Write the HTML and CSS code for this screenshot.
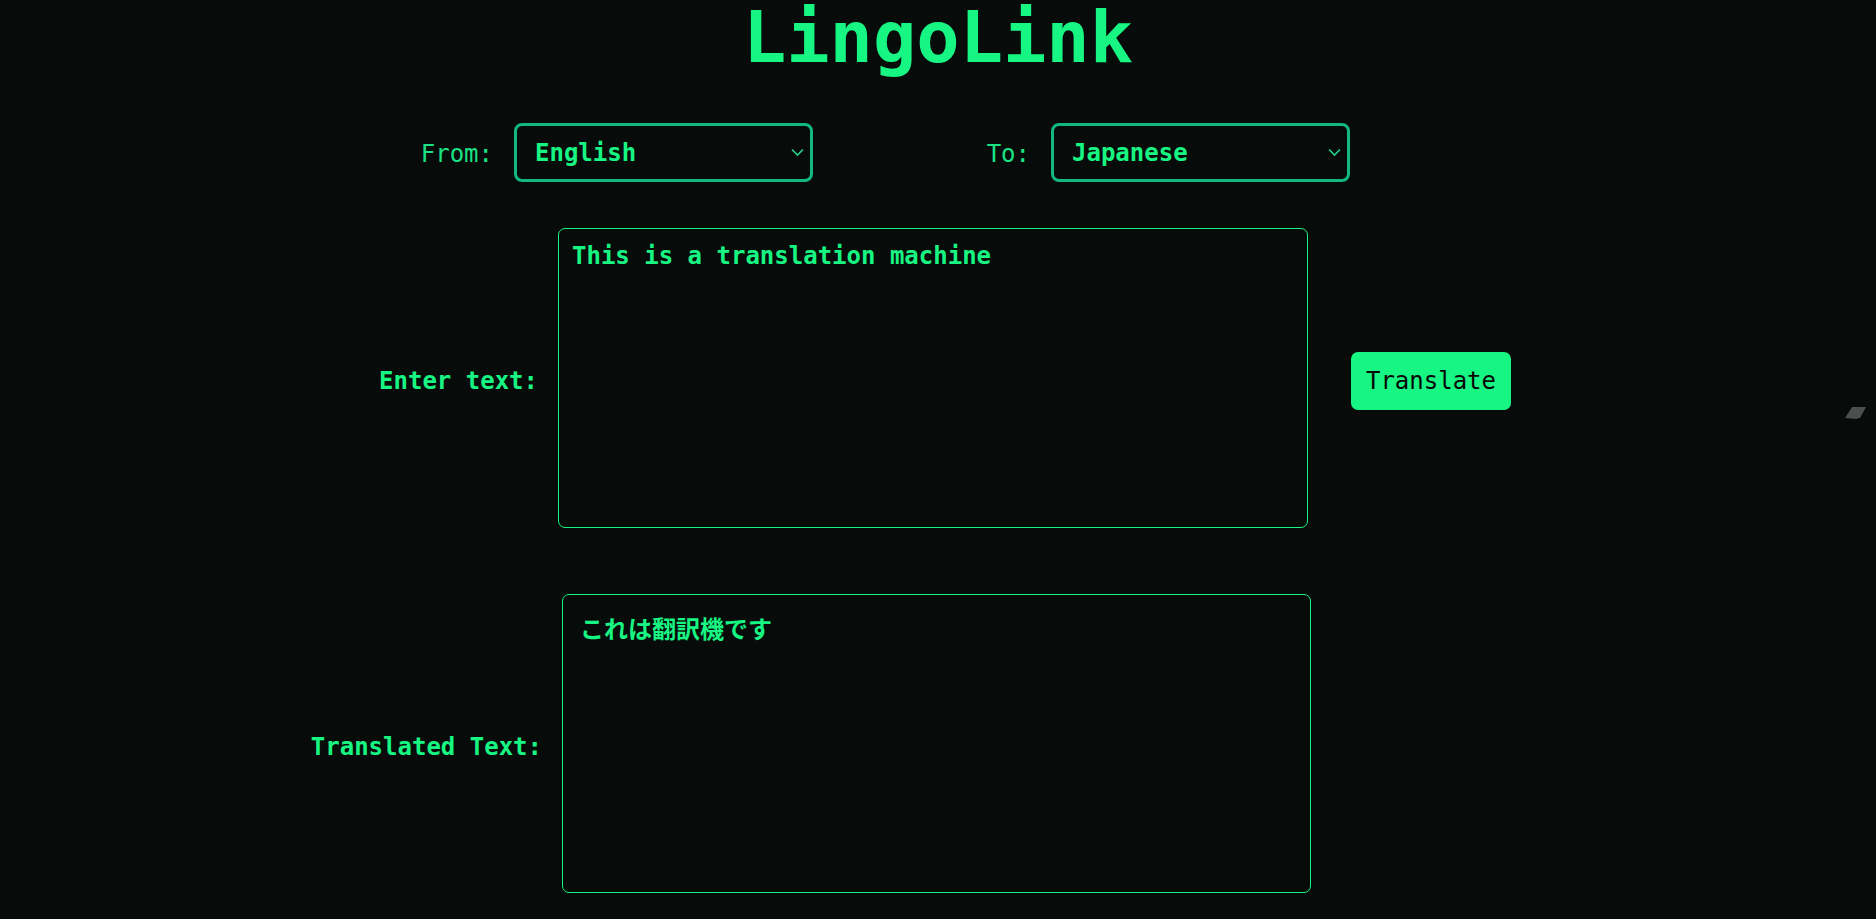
FILE: index.html
```html
<!DOCTYPE html>
<html lang="en">
<head>
<meta charset="utf-8">
<title>LingoLink</title>
<link rel="stylesheet" href="styles.css">
</head>
<body>
<main class="app">
  <h1 class="title">LingoLink</h1>

  <div class="lang-row">
    <div class="lang-group lang-group--from">
      <label class="lang-label" for="from">From:</label>
      <div class="select-wrap">
        <select id="from" class="lang-select">
          <option>English</option>
          <option>Japanese</option>
        </select>
        <svg class="chevron" width="13" height="9" viewBox="0 0 13 9"><path d="M1 1.5 L6.5 7 L12 1.5" fill="none" stroke="currentColor" stroke-width="1.7"/></svg>
      </div>
    </div>
    <div class="lang-group lang-group--to">
      <label class="lang-label" for="to">To:</label>
      <div class="select-wrap">
        <select id="to" class="lang-select">
          <option>Japanese</option>
          <option>English</option>
        </select>
        <svg class="chevron" width="13" height="9" viewBox="0 0 13 9"><path d="M1 1.5 L6.5 7 L12 1.5" fill="none" stroke="currentColor" stroke-width="1.7"/></svg>
      </div>
    </div>
  </div>

  <div class="io-row io-row--input">
    <label class="io-label" for="src">Enter text:</label>
    <textarea id="src" class="io-text">This is a translation machine</textarea>
    <button class="translate-btn" type="button">Translate</button>
  </div>

  <div class="io-row io-row--output">
    <label class="io-label" for="dst">Translated Text:</label>
    <textarea id="dst" class="io-text" readonly>これは翻訳機です</textarea>
  </div>
</main>
<div class="edge-widget">
  <svg width="22" height="13" viewBox="0 0 22 13"><polygon points="7,0 21,0 15,11 13,11 12,12 0,11" fill="#4d4f4f"/></svg>
</div>
</body>
</html>
```

FILE: styles.css
```css
html, body {
  margin: 0;
  padding: 0;
  background: #070b0a;
  height: 100%;
  overflow: hidden;
}

body {
  font-family: "DejaVu Sans Mono", "Noto Sans CJK JP", monospace;
  color: #17f582;
  position: relative;
}

.app {
  display: flex;
  flex-direction: column;
}

.title {
  margin: 0;
  padding-top: 1px;
  font-size: 72px;
  line-height: 72px;
  font-weight: bold;
  text-align: center;
  color: #17f682;
}

.lang-row {
  display: flex;
  align-items: center;
  margin-top: 50px;
  padding-left: 393px;
}

.lang-group {
  display: flex;
  align-items: center;
}

.lang-group--to {
  margin-left: 117px;
}

.lang-label {
  width: 100px;
  margin-right: 21px;
  text-align: right;
  font-size: 24px;
  font-weight: normal;
  color: #1ae285;
  padding-top: 2px;
}

.select-wrap {
  position: relative;
  display: flex;
}

.lang-select {
  appearance: none;
  -webkit-appearance: none;
  box-sizing: border-box;
  width: 299px;
  height: 59px;
  margin: 0;
  padding: 0 40px 0 18px;
  background: #070b0a;
  color: #17f582;
  border: 3px solid #12b784;
  border-radius: 8px;
  font-family: "DejaVu Sans Mono", monospace;
  font-size: 24px;
  font-weight: bold;
  outline: none;
}

.chevron {
  position: absolute;
  right: 9px;
  top: 25px;
  color: #1fd08a;
  pointer-events: none;
}

.io-row {
  display: flex;
  align-items: center;
}

.io-row--input {
  margin-top: 46px;
  padding-left: 298px;
}

.io-row--output {
  margin-top: 66px;
  padding-left: 302px;
}

.io-label {
  width: 240px;
  margin-right: 20px;
  padding-top: 6px;
  text-align: right;
  white-space: nowrap;
  font-size: 24px;
  font-weight: bold;
  color: #17f582;
}

.io-text {
  box-sizing: border-box;
  width: 750px;
  height: 300px;
  margin: 0;
  padding: 13px 13px;
  background: #070b0a;
  color: #17f582;
  border: 1px solid #17f582;
  border-radius: 7px;
  font-family: "DejaVu Sans Mono", "Noto Sans CJK JP", monospace;
  font-size: 24px;
  font-weight: bold;
  line-height: 28px;
  resize: none;
  outline: none;
  overflow: hidden;
}

.io-row--output .io-text {
  padding-top: 21px;
  padding-left: 17px;
  width: 749px;
  height: 299px;
}

.translate-btn {
  box-sizing: border-box;
  width: 160px;
  height: 58px;
  margin: 0 0 0 43px;
  padding: 0;
  position: relative;
  top: 3px;
  background: #17f582;
  color: #050806;
  border: none;
  border-radius: 7px;
  font-family: "DejaVu Sans Mono", monospace;
  font-size: 24px;
  font-weight: normal;
  cursor: pointer;
}

.edge-widget {
  position: absolute;
  left: 1845px;
  top: 407px;
  width: 22px;
  height: 13px;
  line-height: 0;
}
```
